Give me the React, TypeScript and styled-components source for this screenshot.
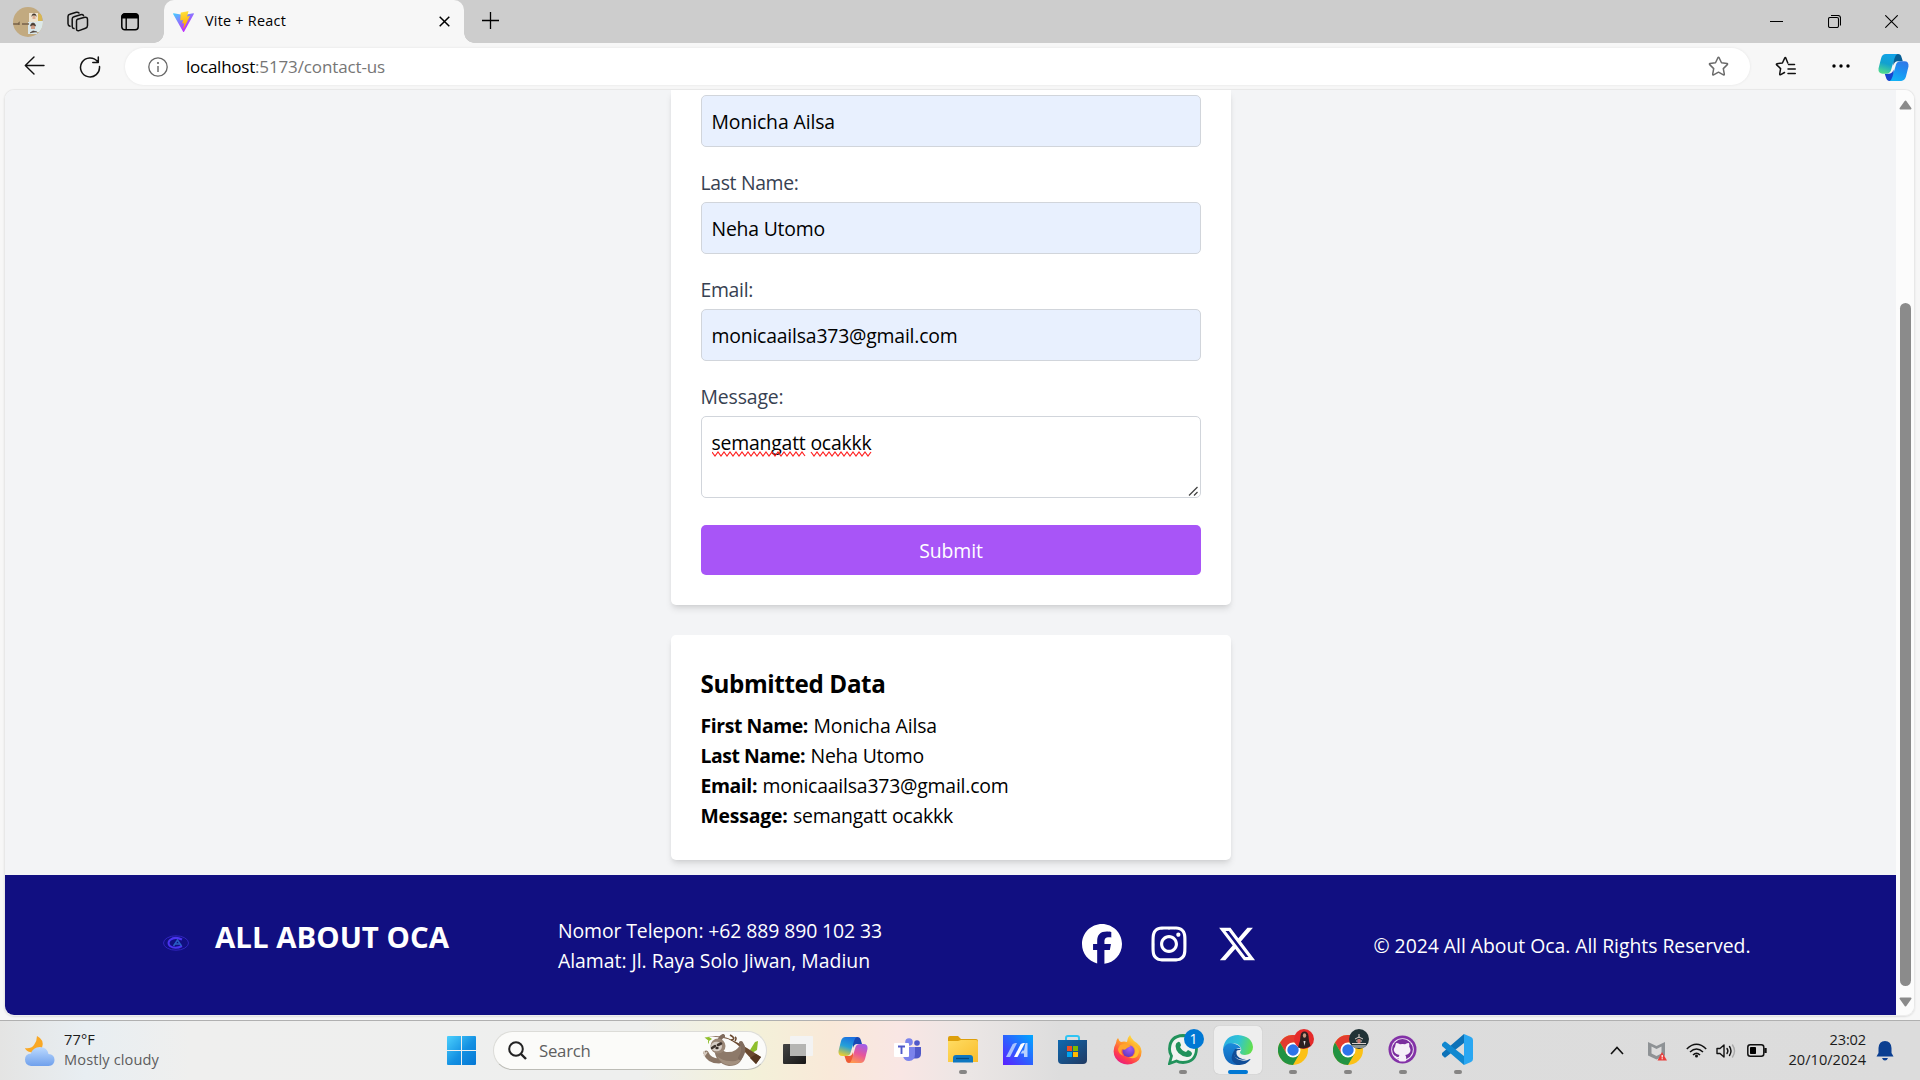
import React, { useLayoutEffect, useRef, useState } from "react";
import styled, { createGlobalStyle, css } from "styled-components";
import { FaFacebook, FaInstagram, FaXTwitter } from "react-icons/fa6";

const GlobalStyle = createGlobalStyle`
  *, *::before, *::after { box-sizing: border-box; }
  html, body { margin: 0; padding: 0; overflow: hidden; }
  body { font-family: "Open Sans", "Noto Sans", sans-serif; color: #000; }
  svg { display: block; flex: none; }
  p, h1, h2 { margin: 0; }
`;

/* ---------- text that keeps a fixed run length ---------- */

const Run = styled.span`
  display: inline-block;
  white-space: pre;
`;

function Fit({ w, children }: { w: number; children: string }) {
  const ref = useRef<HTMLSpanElement>(null);
  const [spacing, setSpacing] = useState(0);
  useLayoutEffect(() => {
    if (ref.current) {
      const natural = ref.current.getBoundingClientRect().width;
      setSpacing((w - natural) / children.length);
    }
  }, []);
  return (
    <Run ref={ref} style={{ letterSpacing: spacing }}>
      {children}
    </Run>
  );
}

/* ---------- browser window ---------- */

const Screen = styled.div`
  width: 1920px;
  height: 1080px;
  display: flex;
  flex-direction: column;
  background: #f7f7f7;
  overflow: hidden;
`;

const TabBar = styled.header`
  height: 43px;
  flex: none;
  display: flex;
  align-items: flex-start;
  background: #cdcdcd;
`;

const TabTools = styled.div`
  width: 164px;
  height: 43px;
  padding-left: 13px;
  display: flex;
  align-items: center;
`;

const ToolSlot = styled.div<{ $w: number; $ml?: number }>`
  width: ${(p) => p.$w}px;
  margin-left: ${(p) => p.$ml ?? 0}px;
  display: flex;
  justify-content: center;
`;

const Tab = styled.div`
  position: relative;
  width: 300px;
  height: 43px;
  padding: 0 14px 1px 9px;
  display: flex;
  align-items: center;
  background: #f7f7f7;
  border-radius: 10px 10px 0 0;
  font-size: 14.4px;
  &::before,
  &::after {
    content: "";
    position: absolute;
    bottom: 0;
    width: 10px;
    height: 10px;
  }
  &::before {
    left: -10px;
    background: radial-gradient(circle at 0 0, #cdcdcd 9.5px, #f7f7f7 10px);
  }
  &::after {
    right: -10px;
    background: radial-gradient(circle at 10px 0, #cdcdcd 9.5px, #f7f7f7 10px);
  }
`;

const TabTitle = styled.span`
  margin: -2px 0 0 11px;
  flex: 1;
`;

const NewTab = styled.div`
  margin: 12px 0 0 18px;
`;

const WindowControls = styled.div`
  margin: 15px 22px 0 auto;
  display: flex;
  gap: 44.5px;
`;

const Toolbar = styled.div`
  height: 46px;
  flex: none;
  display: flex;
  align-items: center;
  padding: 2px 11px 0 24px;
`;

const NavButtons = styled.div`
  width: 101px;
  display: flex;
  gap: 34px;
`;

const AddressBar = styled.div`
  width: 1625px;
  height: 37px;
  padding: 0 21px 0 23px;
  border-radius: 19px;
  background: #fff;
  box-shadow: 0 0 3px rgba(0, 0, 0, 0.08);
  display: flex;
  align-items: center;
  margin-top: -1px;
`;

const Url = styled.div`
  flex: 1;
  margin-left: 18px;
  font-size: 17px;
  color: #767676;
`;

const UrlHost = styled.span`
  color: #000;
`;

const ToolbarEnd = styled.div`
  flex: 1;
  display: flex;
  align-items: center;
  padding-left: 25px;
`;

const MenuDots = styled.div`
  margin: -1px auto 0 36px;
`;

/* ---------- page ---------- */

const Viewport = styled.div`
  height: 927px;
  flex: none;
  margin: 0 5px 0 4px;
  border: 1px solid #e8e8e8;
  border-bottom-color: #ededed;
  border-radius: 10px;
  display: flex;
  overflow: hidden;
  box-shadow: 0 1px 2px rgba(0, 0, 0, 0.1);
`;

const Page = styled.main`
  width: 1891px;
  background: #f3f4f6;
  display: flex;
  flex-direction: column;
  align-items: center;
  overflow: hidden;
`;

const cardBase = css`
  width: 560px;
  flex: none;
  padding: 30px;
  background: #fff;
  box-shadow: 0 5px 7.5px -1px rgba(0, 0, 0, 0.1), 0 2.5px 5px -2.5px rgba(0, 0, 0, 0.1);
`;

const FormCard = styled.section`
  ${cardBase}
  height: 515px;
  padding-top: 5px;
  border-radius: 0 0 5px 5px;
`;

const DataCard = styled.section`
  ${cardBase}
  margin-top: 30px;
  height: 225px;
  border-radius: 5px;
`;

const Label = styled.div`
  height: 30px;
  margin: 20px 0 5px;
  line-height: 32px;
  font-size: 19.4px;
  color: #374151;
`;

const Field = styled.div`
  height: 52px;
  padding: 10px;
  border: 1px solid #d1d5db;
  border-radius: 5px;
  background: #e8f0fe;
  font-size: 19.4px;
  line-height: 32px;
`;

const Area = styled(Field)`
  position: relative;
  height: 82px;
  background: #fff;
`;

const Squiggles = styled.svg`
  position: absolute;
  left: 10px;
  top: 34px;
`;

const Grip = styled.svg`
  position: absolute;
  right: 2px;
  bottom: 1px;
`;

const Submit = styled.button`
  display: flex;
  justify-content: center;
  align-items: center;
  width: 100%;
  height: 50px;
  margin-top: 27px;
  padding: 2px 0 0 1px;
  border: 0;
  border-radius: 5px;
  background: #a855f7;
  color: #fff;
  font: 19.4px/30px "Open Sans", sans-serif;
`;

const DataTitle = styled.h2`
  margin-bottom: 10px;
  font-size: 24.2px;
  line-height: 37px;
  height: 35px;
  font-weight: 700;
`;

const DataRow = styled.p`
  height: 30px;
  line-height: 32px;
  font-size: 19.4px;
  display: flex;
  gap: 5.5px;
`;

const Footer = styled.footer`
  width: 100%;
  height: 140px;
  flex: none;
  margin-top: 15px;
  padding-left: 158px;
  display: flex;
  align-items: center;
  background: #110f81;
  color: #fff;
  font-size: 19.4px;
`;

const Brand = styled.div`
  width: 395px;
  margin-top: -4px;
  display: flex;
  align-items: center;
`;

const BrandName = styled.h1`
  margin: -13px 0 0 26px;
  font-size: 29.4px;
  line-height: 40px;
  font-weight: 700;
`;

const Contact = styled.div`
  width: 519px;
  padding-top: 2px;
  line-height: 30px;
  display: flex;
  flex-direction: column;
  align-items: flex-start;
`;

const Socials = styled.div`
  display: flex;
  gap: 27.5px;
  width: 292px;
  margin-left: 4.5px;
  margin-top: -2px;
  font-size: 40px;
`;

const Copyright = styled.p`
  line-height: 30px;
  margin-top: 2px;
`;

const ScrollTrack = styled.aside`
  flex: 1;
  display: flex;
  flex-direction: column;
  align-items: center;
  justify-content: space-between;
  padding: 10px 0 8px;
  background: #fcfcfc;
`;

const ScrollThumb = styled.div`
  width: 11px;
  height: 683px;
  margin-top: 182px;
  border-radius: 6px;
  background: #8b8b8b;
`;

/* ---------- task bar ---------- */

const TaskBar = styled.footer`
  height: 60px;
  margin-top: 4px;
  flex: none;
  display: flex;
  align-items: center;
  border-top: 1px solid #b0b0b0;
  background: linear-gradient(
    90deg,
    #e4e4e3 0,
    #e8eef2 85px,
    #efefee 190px,
    #eeefee 640px,
    #f3f1d9 750px,
    #f9e9d9 830px,
    #f9e6e4 900px,
    #ebe6e5 970px,
    #dddddd 1060px,
    #dcdcdc 1920px
  );
`;

const Weather = styled.div`
  width: 422px;
  padding-left: 24px;
  display: flex;
  align-items: center;
  gap: 9px;
`;

const WeatherText = styled.div`
  margin-top: -4px;
  display: flex;
  flex-direction: column;
  align-items: flex-start;
  font-size: 14.6px;
  line-height: 20px;
  color: #1b1b1b;
`;

const Muted = styled.span`
  color: #5d5d5d;
`;

const SearchBox = styled.div`
  width: 274px;
  height: 39px;
  margin-left: 17px;
  padding: 0 3px 0 14px;
  display: flex;
  align-items: center;
  border: 1px solid #dcdcd8;
  border-bottom-color: #bcbcb6;
  border-radius: 20px;
  background: #fbfbf9;
  font-size: 16.8px;
  color: #5f5f5f;
`;

const SearchLabel = styled.span`
  flex: 1;
  margin-left: 12px;
`;

const Apps = styled.div`
  display: flex;
  margin-left: 3px;
`;

const AppCell = styled.div`
  width: 55px;
  height: 59px;
  display: flex;
  justify-content: center;
`;

const AppButton = styled.div<{ $active?: boolean }>`
  position: relative;
  width: 48px;
  height: 48px;
  margin-top: 5px;
  border-radius: 5px;
  display: flex;
  align-items: center;
  justify-content: center;
  padding-bottom: 1px;
  background: ${(p) => (p.$active ? "#eeeeee" : "transparent")};
  box-shadow: ${(p) => (p.$active ? "0 0 1px #aaa" : "none")};
`;

const Indicator = styled.i<{ $active?: boolean }>`
  position: absolute;
  bottom: 0;
  left: 50%;
  transform: translateX(-50%);
  width: ${(p) => (p.$active ? 20 : 8)}px;
  height: 4px;
  border-radius: 2px;
  background: ${(p) => (p.$active ? "#0078d4" : "#868584")};
`;

const Badge = styled.span`
  position: absolute;
  right: 3px;
  top: 3px;
  width: 20px;
  height: 20px;
  border-radius: 50%;
  background: #0078d4;
  color: #fff;
  font-size: 14px;
  line-height: 20px;
  text-align: center;
`;

const AvatarBadge = styled.svg`
  position: absolute;
  right: 3px;
  top: 3px;
`;

const Tray = styled.div`
  margin-left: auto;
  padding-right: 26px;
  display: flex;
  align-items: center;
`;

const TraySlot = styled.div<{ $ml: number }>`
  margin-left: ${(p) => p.$ml}px;
`;

const Clock = styled.div`
  width: 99px;
  margin-top: -4px;
  display: flex;
  flex-direction: column;
  align-items: flex-end;
  font-size: 14.6px;
  line-height: 20px;
  color: #1b1b1b;
`;

/* ---------- drawings ---------- */

const line = { fill: "none", stroke: "#111", strokeWidth: 1.4, strokeLinecap: "round", strokeLinejoin: "round" } as const;

const Avatar = () => (
  <svg width="30" height="30" viewBox="0 0 30 30">
    <defs><clipPath id="av"><circle cx="15" cy="15" r="15" /></clipPath></defs>
    <g clipPath="url(#av)">
      <rect width="30" height="30" fill="#c2aa80" />
      <rect x="16" y="6" width="9" height="10" fill="#eee3cf" />
      <rect x="25" y="7" width="4" height="8" fill="#d8b653" />
      <rect x="15" y="15" width="9" height="12" fill="#d9e6ea" />
      <rect x="24" y="14" width="6" height="11" fill="#dce8e8" />
      <path d="M18.500 10q0-3.500 2.500-3.500t2.500 3.500l-1-1.500h-3Z" fill="#43352b" />
      <path d="M19.500 9h3v3h-3Z" fill="#dcae92" />
      <path d="M18 20q0-3 2-3t2 3v2h-4Z" fill="#cf9d86" />
      <path d="M17.500 19q.5-3 2.500-3t2.500 3l-1.500-1h-2ZM17 26l3-2 4 1" stroke="#4b4038" strokeWidth=".8" fill="#4a3a30" />
      <path d="M0 17h5l1-1v2M9 17h7" stroke="#776249" strokeWidth="1.400" fill="none" />
    </g>
  </svg>
);

const Workspaces = () => (
  <svg width="22" height="22" viewBox="0 0 22 22" {...line} strokeWidth="1.500">
    <path d="M10.500 8.200 17.800 6.300Q20.500 6 20.500 8.500V14.500Q20.500 16.500 18.500 17.200L12 19.600Q9.500 20.300 9.500 17.800V10Q9.500 8.600 10.500 8.200Z" />
    <path d="M7 17.600Q5.200 17.400 5.200 15.500V8Q5.200 6.200 7 5.700L13.500 3.800Q15.800 3.200 16.500 4.600" />
    <path d="M3 15.200Q1 14.600 1 12.700V5.600Q1 3.800 2.800 3.300L9.300 1.300Q11 .9 12 2" />
  </svg>
);

const TabActions = () => (
  <svg width="20" height="20" viewBox="0 0 20 20">
    <rect x="1.800" y="1.800" width="16.400" height="16" rx="3" fill="none" stroke="#000" strokeWidth="1.500" />
    <path d="M1.500 6.500V4.500Q1.500 1.500 4.500 1.500h11Q18.500 1.500 18.500 4.500v2Z" />
    <path d="M6.200 6v12" stroke="#000" strokeWidth="1.400" />
  </svg>
);

const ViteLogo = () => (
  <svg width="21" height="21" viewBox="0 0 256 257">
    <defs>
      <linearGradient id="vA" x1="0" x2=".58" y1="0" y2=".79"><stop stopColor="#41d1ff" /><stop offset="1" stopColor="#bd34fe" /></linearGradient>
      <linearGradient id="vB" x1=".43" x2=".5" y1=".02" y2=".9"><stop stopColor="#ffea83" /><stop offset=".08" stopColor="#ffdd35" /><stop offset="1" stopColor="#ffa800" /></linearGradient>
    </defs>
    <path fill="url(#vA)" d="M255.153 37.938 134.897 252.976c-2.483 4.440-8.862 4.466-11.382.048L.875 37.958c-2.746-4.814 1.371-10.646 6.827-9.670l120.385 21.517a6.537 6.537 0 0 0 2.322-.004l117.867-21.483c5.438-.991 9.574 4.796 6.877 9.620Z" />
    <path fill="url(#vB)" d="M185.432.063 96.440 17.501a3.268 3.268 0 0 0-2.634 3.014l-5.474 92.456a3.268 3.268 0 0 0 3.997 3.378l24.777-5.718c2.318-.535 4.413 1.507 3.936 3.838l-7.361 36.047c-.495 2.426 1.782 4.500 4.151 3.780l15.304-4.649c2.372-.720 4.652 1.360 4.150 3.788l-11.698 56.621c-.732 3.542 3.979 5.473 5.943 2.437l1.313-2.028 72.516-144.720c1.215-2.423-.880-5.186-3.540-4.672l-25.505 4.922c-2.396.462-4.435-1.770-3.759-4.114l16.646-57.705c.677-2.350-1.370-4.583-3.769-4.113Z" />
  </svg>
);

const Ribbon = ({ id, c, s }: { id: string; c: string[]; s: number }) => (
  <svg width={s} height={(s * 28) / 30} viewBox="0 0 30 28">
    <defs>
      <linearGradient id={id + "a"} x1=".6" y1="0" x2=".3" y2="1"><stop stopColor={c[0]} /><stop offset=".5" stopColor={c[1]} /><stop offset="1" stopColor={c[2]} /></linearGradient>
      <linearGradient id={id + "b"} x1=".7" y1="0" x2=".3" y2="1"><stop stopColor={c[3]} /><stop offset=".5" stopColor={c[4]} /><stop offset="1" stopColor={c[5]} /></linearGradient>
    </defs>
    <path d="M14 1h5.500Q22 1 22.800 4L24 8h-5q-3 0-4 4Z" fill={c[6]} />
    <path d="M16 27h-5q-2.500 0-3.200-3L6.500 20H11q3 0 4-4Z" fill={c[7]} />
    <path d="M7.500 1H19q-2 .5-3 4l-3.500 12Q11.500 20 8 20H4.500Q0 20 .5 15L3 5Q4.200 1 7.500 1Z" fill={`url(#${id}a)`} />
    <path d="M22.500 27H11q2-.5 3-4l3.500-12Q18.500 8 22 8h3.500Q30 8 29.500 13L27 23q-1.200 4-4.500 4Z" fill={`url(#${id}b)`} />
  </svg>
);

const Star = ({ list }: { list?: boolean }) => (
  <svg width="21" height="21" viewBox="0 0 21 21" fill="none" stroke={list ? "#111" : "#6b6b6b"} strokeWidth="1.500" strokeLinejoin="round" strokeLinecap="round">
    {list ? (
      <path d="M19.500 8.500H13.500M12.800 7 10.900 2.200Q10.300 1 9.700 2.200L7.400 7 2 7.700Q.9 8 1.700 8.900L5.600 12.600 4.700 18Q4.700 19.200 5.700 18.700L9.500 16.500M13 13h7.300M13 17.500h7.300" />
    ) : (
      <path d="M9.900 1.700q.6-1 1.200 0l2.400 5 5.500.8q1 .2.300 1.100l-4 4 1 5.600q.1 1-.9.600l-4.900-2.600-4.900 2.600q-1 .4-.9-.600l1-5.600-4-4Q1 7.700 2 7.500l5.500-.8Z" />
    )}
  </svg>
);

const OcaLogo = () => (
  <svg width="26" height="16" viewBox="0 0 26 16" fill="none">
    <ellipse cx="13" cy="8" rx="12.500" ry="7.200" stroke="#3024bd" strokeWidth="1" />
    <path d="M19 4.500Q12 1 7 5q-3 3 0 6 5 3.500 12 0" stroke="#4a34f0" strokeWidth="2" />
    <path d="m10.500 11 4-6 4 6m-6.500-2h5" stroke="#295fc5" strokeWidth="1.500" />
  </svg>
);

const MoonCloud = () => (
  <svg width="31" height="32" viewBox="0 0 31 32">
    <defs><linearGradient id="cl" x1="0" y1="0" x2="0" y2="1"><stop stopColor="#bcdaff" /><stop offset="1" stopColor="#6fa0ec" /></linearGradient></defs>
    <path d="M13 1q8 4 5 12-4 7-12 4-4-1-5-4 6 1 9-3 3-4 3-9Z" fill="#f9a825" />
    <path d="M7 31Q1 30 1 24.500 1 19 7 18.500 9 12 16 12q7 0 8.500 7 6 .5 6 6 0 5.500-6 6Z" fill="url(#cl)" />
  </svg>
);

const WindowsLogo = () => (
  <svg width="29" height="29" viewBox="0 0 29 29">
    <defs><linearGradient id="wn" gradientUnits="userSpaceOnUse" x1="0" y1="0" x2="29" y2="29"><stop stopColor="#4cd0fd" /><stop offset=".55" stopColor="#1390e2" /><stop offset="1" stopColor="#0477d4" /></linearGradient></defs>
    <path fill="url(#wn)" d="M1 0h13v14H0V1Q0 0 1 0ZM15 0h13q1 0 1 1v13H15ZM0 15h14v14H1q-1 0-1-1ZM15 15h14v13q0 1-1 1H15Z" />
  </svg>
);

const Sloth = () => (
  <svg width="60" height="34" viewBox="0 0 60 34">
    <path d="M6 7 1.500 3.500 6 3 9 5ZM6 10q-2-2 0-5M47 16 52 8l3-1-1 9-5 3Z" fill="#8fbf2c" />
    <path d="M4 3Q14 2 25 5q9 4 16 12l12 13 5-7-14-9Q36 9 27 5 18 1 4 3Z" fill="#6b4a30" />
    <path d="M28 6Q34 5 27 1M32 7q2-3 0-4" stroke="#6b4a30" strokeWidth="1.600" fill="none" />
    <path d="m53 30 5-7-5-3-6 4Z" fill="#543620" />
    <path d="M3 19q3 8 13 8" stroke="#8a7565" strokeWidth="5" fill="none" strokeLinecap="round" />
    <path d="M1 17l1 3M4 18l-3 4" stroke="#d8cdc2" strokeWidth="1.500" />
    <path d="M11 13q1 17 15 19 13 0 14-12 1-6-3-9-4 8-14 7Z" fill="#8d7969" />
    <path d="M14 22q5 10 15 9 8-1 10-8-4 5-12 4-8 0-13-5Z" fill="#a4917f" />
    <path d="M37 24Q43 16 38 9M17 8q-1-4 3-6" stroke="#806c5e" strokeWidth="4" fill="none" strokeLinecap="round" />
    <circle cx="15" cy="12" r="7.500" fill="#9a8777" />
    <ellipse cx="13.500" cy="12.500" rx="5.500" ry="4.800" fill="#d6cdc5" />
    <path d="m9 14 3-2M15 11l3-1.500" stroke="#40352f" strokeWidth="2.600" strokeLinecap="round" />
    <ellipse cx="14" cy="14" rx="1.700" ry="1.200" fill="#352b27" />
  </svg>
);

const TaskView = () => (
  <svg width="30" height="28" viewBox="0 0 30 28">
    <defs><linearGradient id="tv" x1="0" y1="0" x2="1" y2="1"><stop stopColor="#444" /><stop offset="1" stopColor="#171717" /></linearGradient></defs>
    <rect y="8" width="23" height="20" rx="1" fill="url(#tv)" />
    <rect x="7" width="23" height="20" rx="1" fill="#f3f3f3" />
    <path d="M7 8h16v12H8q-1 0-1-1Z" fill="#b5b5b3" />
  </svg>
);

const Teams = () => (
  <svg width="28" height="24" viewBox="0 0 28 24">
    <circle cx="15" cy="4" r="3.800" fill="#7b83eb" />
    <circle cx="23" cy="5" r="2.800" fill="#5059c9" />
    <path d="M18 9h9v6.500q0 5-5 5h-3Z" fill="#5059c9" />
    <path d="M9 9h12v7q0 7-6 7-5 0-6-5Z" fill="#7b83eb" />
    <rect y="5" width="15" height="14" rx="1" fill="#fff" />
    <path d="M4 8.500h7M7.500 8.500V16" stroke="#5059c9" strokeWidth="1.900" />
  </svg>
);

const Folder = () => (
  <svg width="30" height="27" viewBox="0 0 30 27">
    <defs><linearGradient id="fo" x1="0" y1="0" x2="1" y2="1"><stop stopColor="#ffdc63" /><stop offset="1" stopColor="#f9bd2c" /></linearGradient></defs>
    <path d="M0 9V2Q0 0 2 0h8l3 3h15q2 0 2 2v4Z" fill="#dd9f0b" />
    <path d="M0 5h10l3-1h15q2 0 2 2v20H0Z" fill="url(#fo)" />
    <path d="M5 26.500v-4.500q0-3 3-3h14q3 0 3 3v4.500Z" fill="#0f77c0" />
    <path d="M8 22.500h13" stroke="#07497f" strokeWidth="1.300" />
  </svg>
);

const MyAsus = () => (
  <svg width="30" height="30" viewBox="0 0 30 30">
    <defs><linearGradient id="ma" x1="0" y1="1" x2="1" y2="0"><stop stopColor="#5b1fff" /><stop offset=".5" stopColor="#2c62ff" /><stop offset="1" stopColor="#00a8ff" /></linearGradient></defs>
    <rect width="30" height="30" fill="url(#ma)" />
    <path d="M3 22 9.500 9.500q1-1.500 3-1.500h1.500L7 22Z" fill="#a9c2ff" />
    <path d="M11 22 17.500 9.500q1-1.500 3-1.500H22l-7.500 14Z" fill="#fff" />
    <path d="M22.500 8h2V22h-3.500v-3.500h-3.500l2-3h1.500Z" fill="#b8d1ff" />
  </svg>
);

const Store = () => (
  <svg width="29" height="30" viewBox="0 0 29 30">
    <defs><linearGradient id="st" x1="0" y1="0" x2="1" y2="1"><stop stopColor="#0f69b0" /><stop offset="1" stopColor="#213a62" /></linearGradient></defs>
    <path d="M8 6V3q0-2 2-2h9q2 0 2 2v3" fill="none" stroke="#30c4f3" strokeWidth="2" />
    <path d="M0 5h29v20q0 4-4 4H4q-4 0-4-4Z" fill="url(#st)" />
    <path d="M9 11h5v5H9Z" fill="#f25022" /><path d="M15 11h5v5h-5Z" fill="#7fba00" />
    <path d="M9 17h5v5H9Z" fill="#00a4ef" /><path d="M15 17h5v5h-5Z" fill="#ffb900" />
  </svg>
);

const Firefox = () => (
  <svg width="29" height="30" viewBox="0 0 29 30">
    <defs>
      <linearGradient id="ff" x1=".8" y1="0" x2=".2" y2="1"><stop stopColor="#fff044" /><stop offset=".4" stopColor="#ff9a2b" /><stop offset=".75" stopColor="#ff3b4e" /><stop offset="1" stopColor="#e3168a" /></linearGradient>
      <radialGradient id="fp" cx=".6" cy=".3" r=".8"><stop stopColor="#a65cf5" /><stop offset="1" stopColor="#5a35b8" /></radialGradient>
    </defs>
    <path d="M3 8Q3 5 5 3q1 3 3 4 3-1 6 0 0-4 3-7 1 3 4 6 7 4 7.500 10Q29 26 18.500 29 8 31 2.500 23-1.500 16 3 8Z" fill="url(#ff)" />
    <circle cx="15.500" cy="16" r="6" fill="url(#fp)" />
    <path d="M7 10q5-2 8 0 2 0 3 1-2 1-4 2-2 3-5 1-2 4 2 7-6-2-6-7Z" fill="#ffa52d" />
    <path d="M20 10q4 5 1 10-2 3-6 2 9 4 11-5 0-5-6-7Z" fill="#ffc02e" />
  </svg>
);

const WhatsApp = () => (
  <svg width="30" height="31" viewBox="0 0 30 31">
    <path d="M1.500 29.500 3.500 22Q1.500 19 1.500 15 2 2 15 1.500 28 2 28.500 15 28 28 15 28.500q-4 0-6.500-1.500Z" fill="#f1f3f0" stroke="#21925b" strokeWidth="2.800" />
    <path d="M10 8q2-1 3 3 0 1-1 2 2 4 6 5l2-2q3 1 4 3 0 4-5 4Q8 21 7.500 12q0-3 2.500-4Z" fill="#21925b" />
  </svg>
);

const Edge = () => (
  <svg width="30" height="30" viewBox="0 0 30 30">
    <defs>
      <linearGradient id="e1" x1="0" y1=".3" x2="1" y2=".5"><stop stopColor="#2baee2" /><stop offset=".5" stopColor="#2fc3d5" /><stop offset="1" stopColor="#63e04b" /></linearGradient>
      <linearGradient id="e2" x1="0" y1="0" x2="0" y2="1"><stop stopColor="#1b8bdc" /><stop offset="1" stopColor="#1263b8" /></linearGradient>
    </defs>
    <path d="M0 14Q2 0 15 0q14 1 15 12 0 7-8 8-5 0-5-3 2-2 1-4Q15 7 8 9 2 10 0 14Z" fill="url(#e1)" />
    <path d="M0 14Q3 7 10 8.500q6 1 8 5-6-1-7 4-1 7 5 12.400Q1 31 0 14Z" fill="url(#e2)" />
    <path d="M11 16q-1 7 6 9 5 2 10-1 1 0 0 1-5 6-13 4.700Q5 25 11 16Z" fill="#104d98" />
    <path d="M12 14q-3 4 0 8 5 4 11 2-7-1-7-6-1-2 2-4Z" fill="#104d98" />
    <path d="M16.500 19q-1-2 1-4-3-.5-4 1-1 6 6 8 4 0 6-1-7 0-9-4Z" fill="#eee" />
  </svg>
);

const Chrome = () => (
  <svg width="30" height="30" viewBox="0 0 30 30">
    <circle cx="15" cy="15" r="15" fill="#fbc116" />
    <path d="M2 7.500A15 15 0 0 1 28 7.500H15L8.500 18.700Z" fill="#e33b2e" />
    <path d="M2 7.500A15 15 0 0 0 15 30l6.500-11.200L8.500 18.700Z" fill="#229342" />
    <circle cx="15" cy="15" r="7.500" fill="#fff" />
    <circle cx="15" cy="15" r="5.700" fill="#2d74ea" />
  </svg>
);

const Profile = ({ dark }: { dark?: boolean }) => (
  <AvatarBadge width="20" height="20" viewBox="0 0 20 20">
    <circle cx="10" cy="10" r="10" fill={dark ? "#203236" : "#e52b2b"} />
    {dark ? (
      <>
        <path d="M2.500 16h15l-3 3h-9Z" fill="#8b9494" />
        <path d="M3 14.500h14M6 10l4-2 4 2M7 12h6M10 5v4" stroke="#d8cfca" strokeWidth="1" fill="none" />
        <path d="M8.500 10h3v4h-3Z" fill="#c9746d" />
      </>
    ) : (
      <>
        <path d="M4 18.500Q6.500 12 6.500 7q.5-4.500 4-4.500t4 4.500q0 5 2 10-5.500 4-12.500 1.500Z" fill="#2b2021" />
        <ellipse cx="10.500" cy="6.500" rx="1.700" ry="2.200" fill="#c99a83" />
        <path d="m9.500 12 1 5 1-5Z" fill="#ddd" />
      </>
    )}
  </AvatarBadge>
);

const GitHubDesktop = () => (
  <svg width="29" height="29" viewBox="0 0 29 29">
    <circle cx="14.500" cy="14.500" r="14" fill="#8331a7" />
    <circle cx="14.500" cy="14.500" r="11.300" fill="#f1e9f5" />
    <circle cx="14.500" cy="14.500" r="10.400" fill="#7a2d9e" />
    <path d="M8 8q2 0 4 1.300 2.500-.5 5 0Q19 8 21 8q.6 2 .2 3.500 3 5-1 7.500-2 1-3 1 1 1 1 3v3q-3.700 1-7.400 0v-2.500q-4 .5-5-3 2 0 2.500 1 1 1 2.500.2 0-1 .8-1.700-2-.2-3.500-1.200-4-3-1-7.300Q7.300 10 8 8Z" fill="#f5eff8" />
  </svg>
);

const VsCode = () => (
  <svg width="31" height="31" viewBox="0 0 31 31">
    <path d="m22 0 7 3q2 1 2 3v19q0 2-2 3l-7 3Z" fill="#2aa7f2" />
    <path d="M22 0v9L4 23q-1 1-2 0l-2-2v-2Z" fill="#0d72b8" />
    <path d="M22 31v-9L4 8Q3 7 2 8l-2 2v2Z" fill="#1088d0" />
  </svg>
);

type App = { icon: React.ReactNode; extra?: React.ReactNode; open?: boolean; active?: boolean };

const apps: App[] = [
  { icon: <TaskView /> },
  { icon: <Ribbon id="tc" s={30} c={["#1b70e0", "#25a1d8", "#ecce2c", "#a05de8", "#e7559b", "#ff9850", "#1848b4", "#ee5c35"]} /> },
  { icon: <Teams /> },
  { icon: <Folder />, open: true },
  { icon: <MyAsus /> },
  { icon: <Store /> },
  { icon: <Firefox /> },
  { icon: <WhatsApp />, extra: <Badge>1</Badge>, open: true },
  { icon: <Edge />, open: true, active: true },
  { icon: <Chrome />, extra: <Profile />, open: true },
  { icon: <Chrome />, extra: <Profile dark />, open: true },
  { icon: <GitHubDesktop />, open: true },
  { icon: <VsCode />, open: true },
];

const rows = [
  { name: "First Name:", nw: 107.5, value: "Monicha Ailsa", vw: 123.5 },
  { name: "Last Name:", nw: 104.5, value: "Neha Utomo", vw: 113.5 },
  { name: "Email:", nw: 56.5, value: "monicaailsa373@gmail.com", vw: 246 },
  { name: "Message:", nw: 87, value: "semangatt ocakkk", vw: 160 },
];

const zigzag = (from: number, to: number) => {
  let d = `M${from} 1`;
  let down = true;
  for (let x = from + 3; x <= to; x += 3) {
    d += `L${x} ${down ? 5 : 1}`;
    down = !down;
  }
  return d;
};

export default function App() {
  return (
    <Screen>
      <GlobalStyle />
      <TabBar>
        <TabTools>
          <ToolSlot $w={30}><Avatar /></ToolSlot>
          <ToolSlot $w={22} $ml={24}><Workspaces /></ToolSlot>
          <ToolSlot $w={20} $ml={31}><TabActions /></ToolSlot>
        </TabTools>
        <Tab>
          <ViteLogo />
          <TabTitle><Fit w={81}>Vite + React</Fit></TabTitle>
          <svg width="11" height="11" viewBox="0 0 11 11"><path d="m.7.700 9.600 9.600m0-9.600L.7 10.300" stroke="#000" strokeWidth="1.500" /></svg>
        </Tab>
        <NewTab>
          <svg width="17" height="17" viewBox="0 0 17 17"><path d="M8.500 0v17M0 8.500h17" stroke="#000" strokeWidth="1.300" /></svg>
        </NewTab>
        <WindowControls>
          <svg width="13" height="13" viewBox="0 0 13 13"><path d="M0 6.500h13" stroke="#000" /></svg>
          <svg width="13" height="13" viewBox="0 0 13 13" fill="none" stroke="#000" strokeWidth="1.100"><rect x=".5" y="2.500" width="10" height="10" rx="1.500" /><path d="M3 .5h7q2.500 0 2.500 2.500v7.500" /></svg>
          <svg width="13" height="13" viewBox="0 0 13 13"><path d="m.3.300 12.400 12.400m0-12.400L.3 12.700" stroke="#000" strokeWidth="1.100" /></svg>
        </WindowControls>
      </TabBar>
      <Toolbar>
        <NavButtons>
          <svg width="21" height="20" viewBox="0 0 21 20" {...line}><path d="M20 9.500H1.500M10 1 1.300 9.500 10 18" /></svg>
          <svg width="22" height="22" viewBox="0 0 22 22" {...line} strokeWidth="1.500"><path d="M18.500 5.500A9.500 9.500 0 1 0 20.500 10.500M19.300 1v5.500h-5.500" /></svg>
        </NavButtons>
        <AddressBar>
          <svg width="20" height="20" viewBox="0 0 20 20"><circle cx="10" cy="10" r="9.200" fill="none" stroke="#666" strokeWidth="1.300" /><path d="M10 9v6" stroke="#666" strokeWidth="1.400" /><circle cx="10" cy="6" r="1.100" fill="#666" /></svg>
          <Url><UrlHost><Fit w={69}>localhost</Fit></UrlHost><Fit w={130}>:5173/contact-us</Fit></Url>
          <Star />
        </AddressBar>
        <ToolbarEnd>
          <Star list />
          <MenuDots>
            <svg width="18" height="4" viewBox="0 0 18 4"><circle cx="2" cy="2" r="1.700" /><circle cx="9" cy="2" r="1.700" /><circle cx="16" cy="2" r="1.700" /></svg>
          </MenuDots>
          <Ribbon id="cp" s={31} c={["#11a3e8", "#12a1cf", "#50dc8c", "#2f79e8", "#1c91f2", "#12b3f5", "#075f96", "#1745cf"]} />
        </ToolbarEnd>
      </Toolbar>

      <Viewport>
        <Page>
          <FormCard>
            <Field><Fit w={123.5}>Monicha Ailsa</Fit></Field>
            <Label><Fit w={98}>Last Name:</Fit></Label>
            <Field><Fit w={113.5}>Neha Utomo</Fit></Field>
            <Label><Fit w={52.5}>Email:</Fit></Label>
            <Field><Fit w={246}>monicaailsa373@gmail.com</Fit></Field>
            <Label><Fit w={83}>Message:</Fit></Label>
            <Area>
              <Fit w={160}>semangatt ocakkk</Fit>
              <Squiggles width="164" height="6" viewBox="0 0 164 6" fill="none" stroke="#f22" strokeWidth="1.200"><path d={zigzag(0, 93)} /><path d={zigzag(99, 160)} /></Squiggles>
              <Grip width="10" height="10" viewBox="0 0 10 10"><path d="m1 9.500 8.500-8.500M6 9.500 9.500 6" stroke="#444" strokeWidth="1.300" /></Grip>
            </Area>
            <Submit><Fit w={63.5}>Submit</Fit></Submit>
          </FormCard>
          <DataCard>
            <DataTitle><Fit w={185}>Submitted Data</Fit></DataTitle>
            {rows.map((r) => (
              <DataRow key={r.name}>
                <b><Fit w={r.nw}>{r.name}</Fit></b>
                <Fit w={r.vw}>{r.value}</Fit>
              </DataRow>
            ))}
          </DataCard>
          <Footer>
            <Brand>
              <OcaLogo />
              <BrandName><Fit w={234}>ALL ABOUT OCA</Fit></BrandName>
            </Brand>
            <Contact>
              <Fit w={324}>Nomor Telepon: +62 889 890 102 33</Fit>
              <Fit w={312}>Alamat: Jl. Raya Solo Jiwan, Madiun</Fit>
            </Contact>
            <Socials><FaFacebook /><FaInstagram /><FaXTwitter /></Socials>
            <Copyright><Fit w={377}>© 2024 All About Oca. All Rights Reserved.</Fit></Copyright>
          </Footer>
        </Page>
        <ScrollTrack>
          <svg width="13" height="10" viewBox="0 0 13 10"><path d="M6.500 1.500 11.500 8.500h-10Z" fill="#8b8b8b" stroke="#8b8b8b" strokeWidth="2" strokeLinejoin="round" /></svg>
          <ScrollThumb />
          <svg width="13" height="10" viewBox="0 0 13 10"><path d="M6.500 8.500 1.500 1.500h10Z" fill="#8b8b8b" stroke="#8b8b8b" strokeWidth="2" strokeLinejoin="round" /></svg>
        </ScrollTrack>
      </Viewport>

      <TaskBar>
        <Weather>
          <MoonCloud />
          <WeatherText>
            <Fit w={31}>77°F</Fit>
            <Muted><Fit w={95}>Mostly cloudy</Fit></Muted>
          </WeatherText>
        </Weather>
        <ToolSlot $w={29} $ml={25}><WindowsLogo /></ToolSlot>
        <SearchBox>
          <svg width="19" height="19" viewBox="0 0 19 19" fill="none" stroke="#222" strokeWidth="2"><circle cx="8" cy="8" r="6.800" /><path d="m13 13 5 5" strokeWidth="2.400" /></svg>
          <SearchLabel><Fit w={51.5}>Search</Fit></SearchLabel>
          <Sloth />
        </SearchBox>
        <Apps>
          {apps.map((a, i) => (
            <AppCell key={i}>
              <AppButton $active={a.active}>
                {a.icon}
                {a.extra}
                {a.open && <Indicator $active={a.active} />}
              </AppButton>
            </AppCell>
          ))}
        </Apps>
        <Tray>
          <svg width="14" height="9" viewBox="0 0 14 9"><path d="m1 8 6-6.500L13 8" fill="none" stroke="#111" strokeWidth="1.600" /></svg>
          <TraySlot $ml={24}>
            <svg width="19" height="20" viewBox="0 0 19 20"><path d="m0 1 8.500 4L17 1v13.500L8.500 18.500 0 14.500Zm3.500 4.500v7l5 2.500 5-2.500v-7l-5 2.500Z" fill="#8e9295" fillRule="evenodd" /><path d="m14 11 5 8.500H9.500Z" fill="#ea3e3b" /><path d="M14.200 14v2.500m0 .8v1" stroke="#fff" strokeWidth="1.200" /></svg>
          </TraySlot>
          <TraySlot $ml={19}>
            <svg width="21" height="15" viewBox="0 0 21 15" {...line} strokeWidth="1.500" strokeLinecap="butt"><path d="M.8 6q9.700-9.500 19.400 0M4 9q6.500-6 13 0M7 12q3.500-3.500 7 0" /><circle cx="10.500" cy="13" r="1.500" fill="#111" stroke="none" /></svg>
          </TraySlot>
          <TraySlot $ml={9}>
            <svg width="21" height="16" viewBox="0 0 21 16" {...line}><path d="M1 5.500h3L8 2v12l-4-3.500H1ZM11 5.500q1.800 2.500 0 5M13.500 3.500q3 4.500 0 9" /><path d="M16.500 2q4 6 0 12" stroke="#aaa" /></svg>
          </TraySlot>
          <TraySlot $ml={10}>
            <svg width="20" height="13" viewBox="0 0 20 13"><rect x=".8" y=".8" width="16" height="11.400" rx="2.500" fill="none" stroke="#111" strokeWidth="1.500" /><rect x="3" y="3" width="6" height="7" rx=".7" /><path d="M18.500 4v5" stroke="#111" strokeWidth="2.400" /></svg>
          </TraySlot>
          <Clock>
            <Fit w={36.500}>23:02</Fit>
            <Fit w={77.500}>20/10/2024</Fit>
          </Clock>
          <TraySlot $ml={10}>
            <svg width="18" height="20" viewBox="0 0 18 20"><path d="M9 0q6 0 6.500 7v5l2 3.500H.5L2.500 12V7Q3 0 9 0ZM6 17h6q-1 2.500-3 2.500T6 17Z" fill="#0b3f91" /></svg>
          </TraySlot>
        </Tray>
      </TaskBar>
    </Screen>
  );
}
